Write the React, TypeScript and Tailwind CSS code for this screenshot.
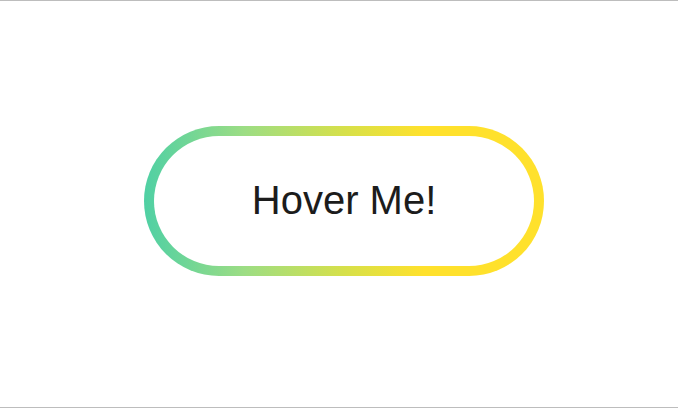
export default function App() {
  return (
    <div className="flex h-[408px] w-full items-center justify-center border-y border-[#bdbdbd] bg-white pb-[6px] pl-[10px]">
      {/* Gradient ring */}
      <button className="h-[150px] w-[400px] cursor-pointer rounded-full bg-[linear-gradient(to_right,#4fd0a4_0%,#9cdd84_25%,#d6e04a_50%,#ffe12c_70%,#ffe12c_100%)] p-[10px]">
        <span className="flex h-full w-full items-center justify-center rounded-full bg-white pb-[2px] font-['Liberation_Sans',Arial,sans-serif] text-[40px] text-[#1c1c1c]">
          Hover Me!
        </span>
      </button>
    </div>
  )
}
